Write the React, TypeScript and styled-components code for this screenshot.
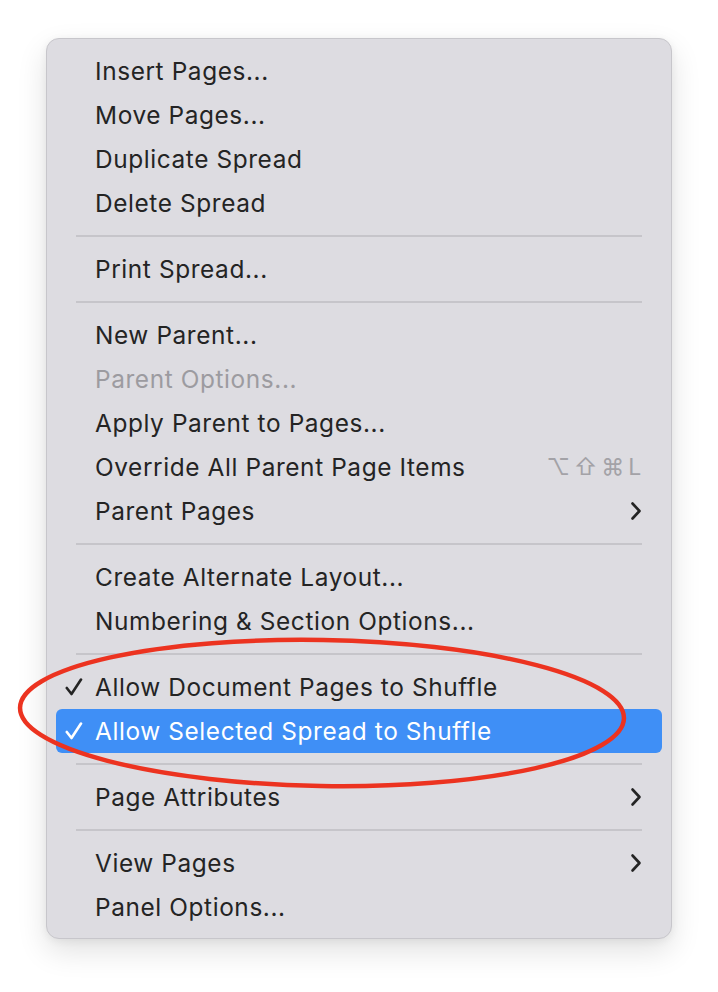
import React from "react";
import styled, { createGlobalStyle } from "styled-components";

const Global = createGlobalStyle`
  html, body { margin: 0; padding: 0; background: #ffffff; }
  body { font-family: Inter, "Noto Sans", sans-serif; }
`;

const Page = styled.div`
  position: relative;
  width: 718px;
  height: 992px;
  padding: 38px 46px 0 46px;
  box-sizing: border-box;
`;

const Menu = styled.div`
  width: 626px;
  box-sizing: border-box;
  background: #dddce1;
  border: 1px solid #c7c6cb;
  border-radius: 13px;
  padding: 10px 9px 9px 9px;
  box-shadow: 0 12px 30px rgba(0, 0, 0, 0.12), 0 2px 8px rgba(0, 0, 0, 0.06);
  display: flex;
  flex-direction: column;
`;

const Row = styled.div<{ $active?: boolean; $disabled?: boolean }>`
  height: 44px;
  display: flex;
  align-items: center;
  padding: 0 20px 0 39px;
  border-radius: 6px;
  position: relative;
  font-size: 24.4px;
  letter-spacing: 0.6px;
  color: ${(p) => (p.$active ? "#ffffff" : p.$disabled ? "#9c9ba0" : "#242424")};
  background: ${(p) => (p.$active ? "#3f8ff6" : "transparent")};
`;

const Check = styled.span`
  position: absolute;
  left: 9px;
  top: 0;
  height: 44px;
  display: flex;
  align-items: center;
`;

const Label = styled.span`
  flex: 1;
`;

const Shortcut = styled.span`
  color: #a3a2a7;
  font-size: 23px;
  letter-spacing: 3.8px;
  margin-right: -3px;
`;

const Sep = styled.div`
  height: 2px;
  background: #c6c5ca;
  margin: 10px 20px 10px 20px;
`;

const Ellipse = styled.svg`
  position: absolute;
  left: 0;
  top: 0;
  pointer-events: none;
`;

const Chevron = () => (
  <svg width="12" height="20" viewBox="0 0 12 20">
    <path d="M2.5 2.5 L9.5 10 L2.5 17.5" fill="none" stroke="currentColor" strokeWidth="2.6" strokeLinecap="round" strokeLinejoin="round" />
  </svg>
);

const CheckMark = ({ color }: { color: string }) => (
  <svg width="18" height="20" viewBox="0 0 18 20">
    <path d="M1.8 11 L6.5 17 L16 2.5" fill="none" stroke={color} strokeWidth="2.6" strokeLinecap="round" strokeLinejoin="round" />
  </svg>
);

type Item = { label: string; disabled?: boolean; sub?: boolean; shortcut?: string; check?: boolean; active?: boolean };

const groups: Item[][] = [
  [{ label: "Insert Pages..." }, { label: "Move Pages..." }, { label: "Duplicate Spread" }, { label: "Delete Spread" }],
  [{ label: "Print Spread..." }],
  [
    { label: "New Parent..." },
    { label: "Parent Options...", disabled: true },
    { label: "Apply Parent to Pages..." },
    { label: "Override All Parent Page Items", shortcut: "⌥⇧⌘L" },
    { label: "Parent Pages", sub: true },
  ],
  [{ label: "Create Alternate Layout..." }, { label: "Numbering & Section Options..." }],
  [
    { label: "Allow Document Pages to Shuffle", check: true },
    { label: "Allow Selected Spread to Shuffle", check: true, active: true },
  ],
  [{ label: "Page Attributes", sub: true }],
  [{ label: "View Pages", sub: true }, { label: "Panel Options..." }],
];

export default function App() {
  return (
    <>
      <Global />
      <Page>
        <Menu>
          {groups.map((g, gi) => (
            <React.Fragment key={gi}>
              {gi > 0 && <Sep />}
              {g.map((it) => (
                <Row key={it.label} $active={it.active} $disabled={it.disabled}>
                  {it.check && (
                    <Check>
                      <CheckMark color={it.active ? "#ffffff" : "#242424"} />
                    </Check>
                  )}
                  <Label>{it.label}</Label>
                  {it.shortcut && <Shortcut>{it.shortcut}</Shortcut>}
                  {it.sub && <Chevron />}
                </Row>
              ))}
            </React.Fragment>
          ))}
        </Menu>
        <Ellipse width="718" height="992">
          <ellipse cx="322" cy="713" rx="302" ry="73" fill="none" stroke="#ec3320" strokeWidth="4.5" transform="rotate(1 322 713)" />
        </Ellipse>
      </Page>
    </>
  );
}
